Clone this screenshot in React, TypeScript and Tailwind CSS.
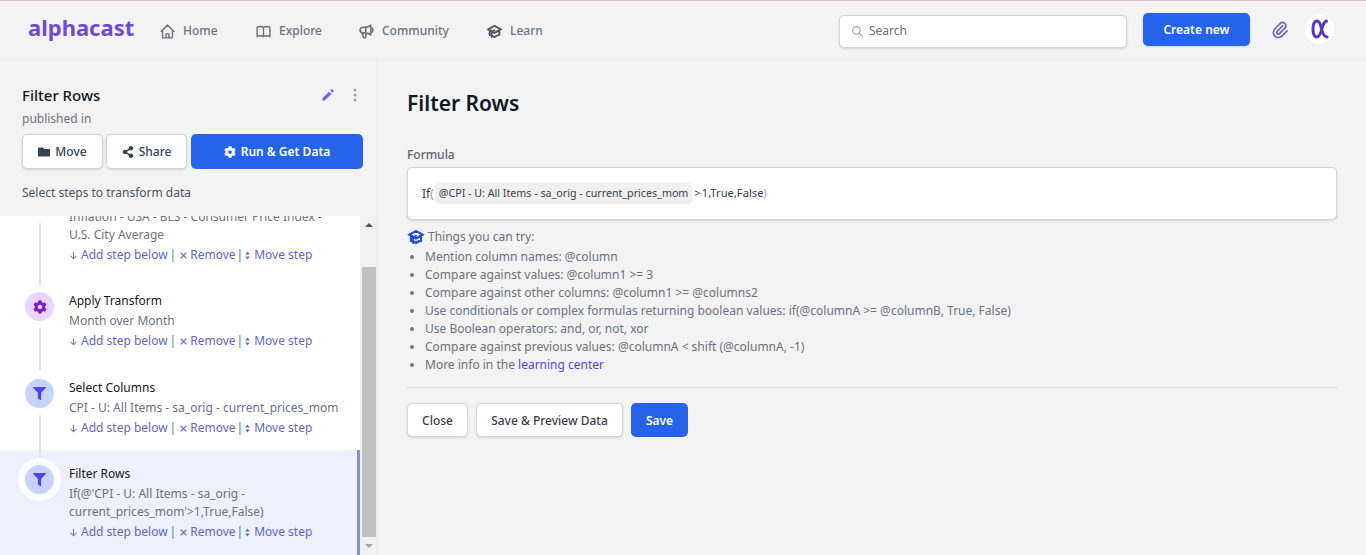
import { FaCog, FaFilter, FaFolder, FaShareAlt } from "react-icons/fa";
import { HiOutlineHome, HiOutlineBookOpen, HiOutlineSpeakerphone, HiOutlineAcademicCap, HiOutlineSearch, HiOutlinePaperClip, HiPencil } from "react-icons/hi";
import { BsThreeDotsVertical, BsArrowDownShort, BsX } from "react-icons/bs";
import { ReactNode } from "react";

const font = { fontFamily: '"Noto Sans", sans-serif' };

function MoveGlyph() {
  return (
    <svg viewBox="0 0 5 9" className="w-[5px] h-[9px] ml-[2px] mr-[4px] shrink-0" fill="currentColor">
      <path d="M2.5 0.5 L4.8 3.6 L0.2 3.6 Z" />
      <path d="M2.5 8.5 L4.8 5.4 L0.2 5.4 Z" />
    </svg>
  );
}

function Links() {
  return (
    <div className="flex items-center h-5 text-xs text-[#6366c9]">
      <BsArrowDownShort className="w-[15px] h-[15px] -ml-[3px]" />
      <span>Add step below</span>
      <span className="text-[#3a8a80] ml-[2px]">|</span>
      <BsX className="w-[13px] h-[13px] ml-[1px] stroke-[0.6px]" />
      <span>Remove</span>
      <span className="text-[#12907a] ml-[1px]">|</span>
      <MoveGlyph />
      <span>Move step</span>
    </div>
  );
}

function Step({ title, icon, tone, desc, line, selected, pad, first }: { title?: string; icon: ReactNode; tone: string; desc: ReactNode; line?: boolean; selected?: boolean; pad: string; first?: boolean }) {
  return (
    <div className={`flex pl-[25px] ${pad} ${selected ? "bg-[#edf0fd] border-r-[3px] border-[#838de0]" : ""}`}>
      <div className="flex flex-col items-center w-[29px] shrink-0 mr-[15px]">
        <div className={`${first ? "" : "mt-px"} w-[29px] h-[29px] rounded-full flex items-center justify-center shrink-0 ${tone} ${selected ? "ring-[7px] ring-white" : ""}`}>
          {icon}
        </div>
        {line && <div className="relative z-10 w-[2px] flex-1 bg-[#e3e3e3] mt-[7px] -mb-[20px]" />}
      </div>
      <div className="min-w-0">
        <div className="text-xs leading-5 h-5 text-[#111827]">{title}</div>
        <div className="text-xs leading-[18px] py-px text-[#6b7280]">{desc}</div>
        <Links />
      </div>
    </div>
  );
}

function OutlineButton({ children, className = "" }: { children: ReactNode; className?: string }) {
  return (
    <button className={`h-[35px] pt-px flex items-center justify-center gap-[5px] bg-white border border-[#d1d5db] rounded-[5px] shadow-sm text-xs font-medium text-[#374151] ${className}`}>
      {children}
    </button>
  );
}

const nav = [
  { label: "Home", Icon: HiOutlineHome, w: "w-[96px]", ic: "" },
  { label: "Explore", Icon: HiOutlineBookOpen, w: "w-[103px]", ic: "" },
  { label: "Community", Icon: HiOutlineSpeakerphone, w: "w-[128px]", ic: "stroke-[2.3px]" },
  { label: "Learn", Icon: HiOutlineAcademicCap, w: "w-[56px]", ic: "stroke-[2.2px] text-[#4b5563]" },
];

const tips: ReactNode[] = [
  "Mention column names: @column",
  "Compare against values: @column1 >= 3",
  "Compare against other columns: @column1 >= @columns2",
  "Use conditionals or complex formulas returning boolean values: if(@columnA >= @columnB, True, False)",
  "Use Boolean operators: and, or, not, xor",
  "Compare against previous values: @columnA < shift (@columnA, -1)",
  <>More info in the <span className="text-[#4f46e5]">learning center</span></>,
];

function AlphaMark() {
  return (
    <svg viewBox="0 0 18 20" className="w-[18px] h-[20px]" fill="none" stroke="#5b34c9" strokeWidth="3" strokeLinecap="round">
      <path d="M15.5 2 C13.5 2.5 12.5 4.5 11.4 8 C10.2 13 8.4 18 5.8 18 C3.2 18 2 14.5 2 10 C2 5.5 3.5 2 6 2 C8.6 2 9.6 5.5 10.6 10 C11.6 14.5 13 17.6 16 18" />
    </svg>
  );
}

export default function App() {
  return (
    <div style={font} className="w-[1366px] h-[555px] overflow-hidden bg-[#f3f3f3] flex flex-col">
      <header className="h-[60px] shrink-0 flex items-center border-t border-t-[#d9c3c8] border-b border-b-[#ebebeb] pl-[28px] pr-[31px]">
        <div className="text-[22px] leading-none font-bold text-[#6d4bd8] w-[131px] -mt-[7px]">alphacast</div>
        <nav className="flex items-center text-xs font-medium text-[#6b7280] mt-[2px]">
          {nav.map(({ label, Icon, w, ic }) => (
            <div key={label} className={`flex items-center gap-[7px] ${w}`}>
              <Icon className={`w-[17px] h-[17px] shrink-0 ${ic}`} />
              <span>{label}</span>
            </div>
          ))}
        </nav>
        <div className="ml-auto flex items-center">
          <div className="w-[288px] h-[33px] mt-[2px] bg-white border border-[#d1d5db] rounded-[5px] shadow-sm flex items-center pl-[11px] gap-[5px] text-xs text-[#6b7280]">
            <HiOutlineSearch className="w-[13px] h-[13px] text-[#9ca3af]" />
            <span>Search</span>
          </div>
          <button className="ml-[16px] w-[107px] h-[33px] -mt-[2px] pt-[2px] bg-[#2563eb] text-white rounded-[5px] shadow-sm text-xs font-semibold">Create new</button>
          <HiOutlinePaperClip className="ml-[20px] w-[20px] h-[20px] text-[#6366c9]" />
          <div className="ml-[15px] mr-[1px] -mt-[2px] w-[29px] h-[29px] rounded-full bg-white flex items-center justify-center">
            <AlphaMark />
          </div>
        </div>
      </header>

      <div className="flex-1 min-h-0 flex">
        <aside className="w-[378px] shrink-0 border-r border-[#e8e8e8] flex flex-col">
          <div className="h-[156px] shrink-0 px-[22px] pt-[25px] pr-[14px]">
            <div className="flex items-center h-5">
              <div className="text-[15px] font-medium text-[#111827] flex-1">Filter Rows</div>
              <HiPencil className="w-[16px] h-[16px] text-[#6366e1]" />
              <BsThreeDotsVertical className="w-[16px] h-[16px] text-[#9ca3af] ml-[11px]" />
            </div>
            <div className="text-xs text-[#6b7280] mt-[5px] leading-[18px]">published in</div>
            <div className="flex mt-[6px] gap-[3px]">
              <OutlineButton className="w-[81px]"><FaFolder className="w-[12px] h-[12px] text-[#374151]" />Move</OutlineButton>
              <OutlineButton className="w-[81px]"><FaShareAlt className="w-[12px] h-[12px] text-[#374151]" />Share</OutlineButton>
              <button className="ml-px w-[172px] h-[35px] pt-px flex items-center justify-center gap-[5px] bg-[#2563eb] text-white rounded-[5px] text-xs font-semibold">
                <FaCog className="w-[12px] h-[12px]" />Run &amp; Get Data
              </button>
            </div>
            <div className="text-xs text-[#4b5563] mt-[15px] leading-[18px]">Select steps to transform data</div>
          </div>
          <div className="flex-1 min-h-0 flex overflow-hidden">
            <div className="w-[360px] shrink-0 bg-white overflow-hidden">
              <div className="-mt-[42px]">
                <Step
                  first
                  pad="pt-[13px] pb-[13px]"
                  tone="bg-[#c7d2fe]"
                  icon={<FaFilter className="w-[13px] h-[13px] text-[#4f46e5]" />}
                  desc={<>Inflation - USA - BLS - Consumer Price Index -<br />U.S. City Average</>}
                  line
                />
                <Step
                  title="Apply Transform"
                  pad="pt-[13px] pb-[14px]"
                  tone="bg-[#e9d5ff]"
                  icon={<FaCog className="w-[14px] h-[14px] text-[#7e22ce]" />}
                  desc="Month over Month"
                  line
                />
                <Step
                  title="Select Columns"
                  pad="pt-[13px] pb-[12px]"
                  tone="bg-[#c7d2fe]"
                  icon={<FaFilter className="w-[13px] h-[13px] text-[#4f46e5]" />}
                  desc="CPI - U: All Items - sa_orig - current_prices_mom"
                  line
                />
                <Step
                  title="Filter Rows"
                  pad="pt-[14px] pb-[14px]"
                  tone="bg-[#c7d2fe]"
                  icon={<FaFilter className="w-[13px] h-[13px] text-[#4f46e5]" />}
                  desc={<>If(@'CPI - U: All Items - sa_orig -<br />current_prices_mom'&gt;1,True,False)</>}
                  selected
                />
              </div>
            </div>
            <div className="w-[17px] shrink-0 bg-[#f1f1f1] flex flex-col items-center">
              <div className="h-[17px] flex items-center justify-center">
                <div className="w-0 h-0 border-x-[4px] border-x-transparent border-b-[4px] border-b-[#505050]" />
              </div>
              <div className="mt-[34px] w-[14px] ml-[1px] h-[270px] bg-[#c1c1c1]" />
              <div className="h-[17px] flex items-center justify-center">
                <div className="w-0 h-0 border-x-[4px] border-x-transparent border-t-[4px] border-t-[#a3a3a3]" />
              </div>
            </div>
          </div>
        </aside>

        <main className="flex-1 min-w-0 pl-[29px] pr-[29px] pt-[29px]">
          <h1 className="text-[21px] font-semibold leading-7 text-[#111827]">Filter Rows</h1>
          <div className="mt-[29px] text-xs font-medium text-[#5b6470] leading-[18px]">Formula</div>
          <div className="mt-[3px] h-[53px] bg-white border border-[#d1d5db] rounded-[5px] shadow-sm flex items-center pl-[14px] text-xs text-[#374151]">
            <span>If<span className="text-[#a78bca]">(</span></span>
            <span className="ml-px bg-[#f0f0f0] rounded-[4px] px-[4px] h-[21px] leading-[21px] text-[10.7px]">@CPI - U: All Items - sa_orig - current_prices_mom</span>
            <span className="ml-[2px] flex gap-[1px] text-[11.2px]"><span>&gt;</span><span>1,True,False<span className="text-[#a78bca]">)</span></span></span>
          </div>
          <div className="mt-[8px] flex items-center gap-[3px] h-[18px] text-xs text-[#6b7280]">
            <HiOutlineAcademicCap className="w-[18px] h-[18px] text-[#1d4ed8] stroke-[2.5px]" />
            <span>Things you can try:</span>
          </div>
          <ul className="mt-[2px] list-disc pl-[18px] text-xs leading-[18px] text-[#6b7280]">
            {tips.map((t, i) => <li key={i}>{t}</li>)}
          </ul>
          <div className="mt-[13px] border-t border-[#e5e5e5]" />
          <div className="mt-[15px] flex gap-[8px]">
            <OutlineButton className="w-[61px] !h-[34px]">Close</OutlineButton>
            <OutlineButton className="w-[147px] !h-[34px]">Save &amp; Preview Data</OutlineButton>
            <button className="w-[57px] h-[34px] pt-px bg-[#2563eb] text-white rounded-[5px] text-xs font-semibold">Save</button>
          </div>
        </main>
      </div>
    </div>
  );
}
